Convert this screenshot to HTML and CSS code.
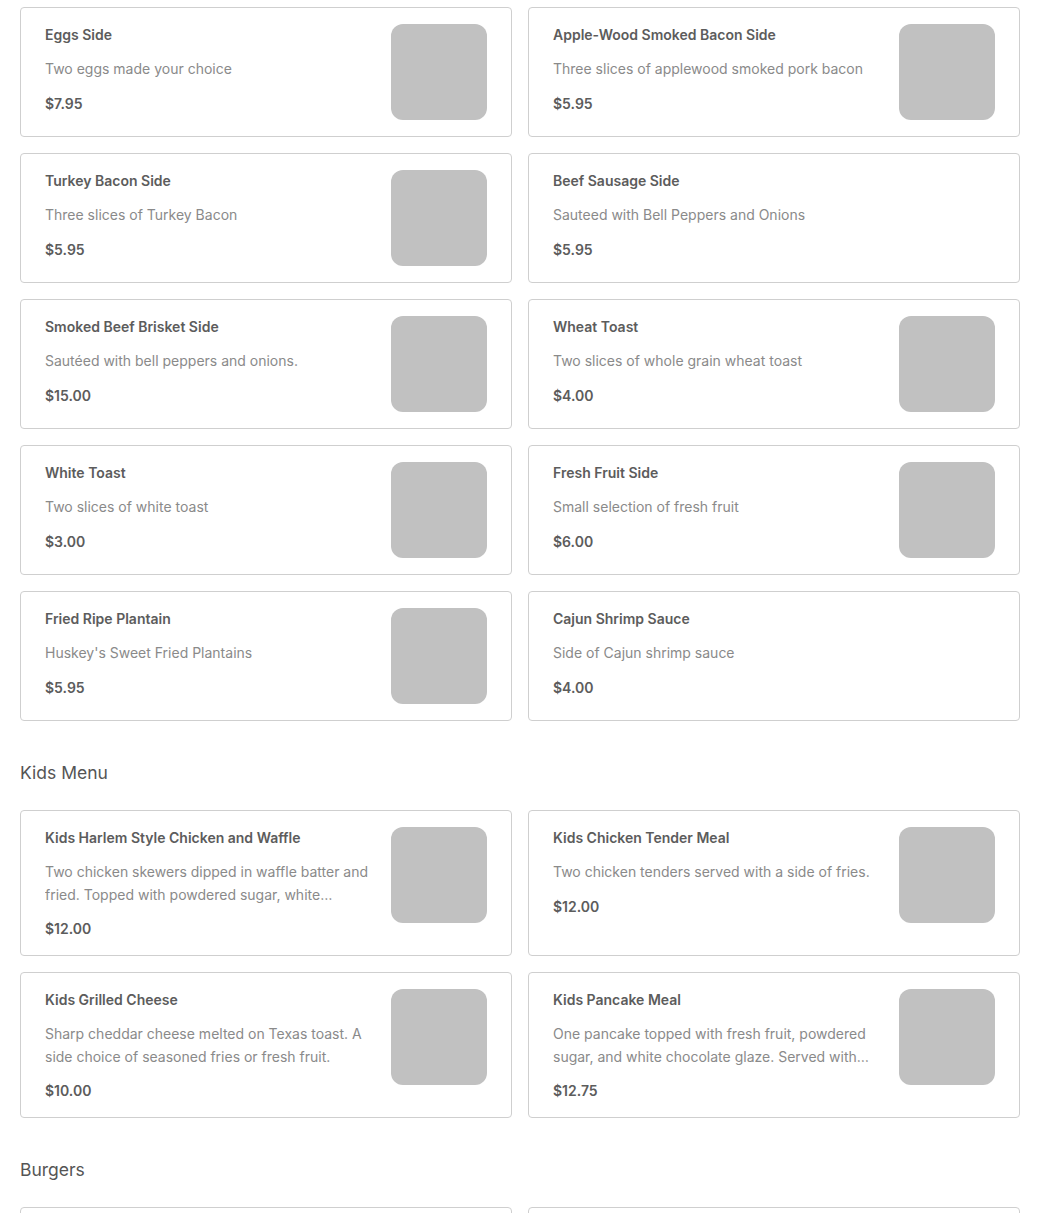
FILE: index.html
```html
<!DOCTYPE html>
<html lang="en">
<head>
<meta charset="utf-8">
<title>Menu</title>
<link rel="stylesheet" href="styles.css">
</head>
<body>
<main class="menu">
  <section class="section">
    <div class="grid">
      <article class="card">
        <div class="info"><h3 class="name">Eggs Side</h3><p class="desc">Two eggs made your choice</p><p class="price">$7.95</p></div>
        <div class="thumb"></div>
      </article>
      <article class="card">
        <div class="info"><h3 class="name">Apple-Wood Smoked Bacon Side</h3><p class="desc">Three slices of applewood smoked pork bacon</p><p class="price">$5.95</p></div>
        <div class="thumb"></div>
      </article>
      <article class="card">
        <div class="info"><h3 class="name">Turkey Bacon Side</h3><p class="desc">Three slices of Turkey Bacon</p><p class="price">$5.95</p></div>
        <div class="thumb"></div>
      </article>
      <article class="card">
        <div class="info"><h3 class="name">Beef Sausage Side</h3><p class="desc">Sauteed with Bell Peppers and Onions</p><p class="price">$5.95</p></div>
      </article>
      <article class="card">
        <div class="info"><h3 class="name">Smoked Beef Brisket Side</h3><p class="desc">Sautéed with bell peppers and onions.</p><p class="price">$15.00</p></div>
        <div class="thumb"></div>
      </article>
      <article class="card">
        <div class="info"><h3 class="name">Wheat Toast</h3><p class="desc">Two slices of whole grain wheat toast</p><p class="price">$4.00</p></div>
        <div class="thumb"></div>
      </article>
      <article class="card">
        <div class="info"><h3 class="name">White Toast</h3><p class="desc">Two slices of white toast</p><p class="price">$3.00</p></div>
        <div class="thumb"></div>
      </article>
      <article class="card">
        <div class="info"><h3 class="name">Fresh Fruit Side</h3><p class="desc">Small selection of fresh fruit</p><p class="price">$6.00</p></div>
        <div class="thumb"></div>
      </article>
      <article class="card">
        <div class="info"><h3 class="name">Fried Ripe Plantain</h3><p class="desc">Huskey's Sweet Fried Plantains</p><p class="price">$5.95</p></div>
        <div class="thumb"></div>
      </article>
      <article class="card">
        <div class="info"><h3 class="name">Cajun Shrimp Sauce</h3><p class="desc">Side of Cajun shrimp sauce</p><p class="price">$4.00</p></div>
      </article>
    </div>
  </section>

  <section class="section">
    <h2 class="section-title">Kids Menu</h2>
    <div class="grid">
      <article class="card">
        <div class="info"><h3 class="name">Kids Harlem Style Chicken and Waffle</h3><p class="desc">Two chicken skewers dipped in waffle batter and fried. Topped with powdered sugar, white chocolate glaze and strawberries.</p><p class="price">$12.00</p></div>
        <div class="thumb"></div>
      </article>
      <article class="card">
        <div class="info"><h3 class="name">Kids Chicken Tender Meal</h3><p class="desc">Two chicken tenders served with a side of fries.</p><p class="price">$12.00</p></div>
        <div class="thumb"></div>
      </article>
      <article class="card">
        <div class="info"><h3 class="name">Kids Grilled Cheese</h3><p class="desc">Sharp cheddar cheese melted on Texas toast. A side choice of seasoned fries or fresh fruit.</p><p class="price">$10.00</p></div>
        <div class="thumb"></div>
      </article>
      <article class="card">
        <div class="info"><h3 class="name">Kids Pancake Meal</h3><p class="desc">One pancake topped with fresh fruit, powdered sugar, and white chocolate glaze. Served with bacon.</p><p class="price">$12.75</p></div>
        <div class="thumb"></div>
      </article>
    </div>
  </section>

  <section class="section">
    <h2 class="section-title">Burgers</h2>
    <div class="grid">
      <article class="card card-empty"></article>
      <article class="card card-empty"></article>
    </div>
  </section>
</main>
</body>
</html>
```

FILE: styles.css
```css
* { box-sizing: border-box; }

html, body {
  margin: 0;
  padding: 0;
  background: #ffffff;
}

body {
  font-family: Inter, "Noto Sans", "Liberation Sans", sans-serif;
  font-size: 14px;
  color: #555555;
}

.menu {
  width: 1000px;
  margin: 0 20px;
  padding-top: 7px;
}

.section-title {
  margin: 40px 0 25px;
  font-size: 17.5px;
  line-height: 24px;
  font-weight: 400;
  color: #555555;
}

.grid {
  display: grid;
  grid-template-columns: 1fr 1fr;
  gap: 16px;
}

.card {
  display: flex;
  align-items: flex-start;
  gap: 20px;
  min-height: 130px;
  padding: 16px 24px;
  border: 1px solid #cfcfcf;
  border-radius: 4px;
  background: #fff;
}

.info {
  flex: 1;
  min-width: 0;
  display: flex;
  flex-direction: column;
}

.name {
  margin: 0 0 13px;
  font-size: 14px;
  line-height: 21px;
  font-weight: 600;
  color: #5c5c5c;
}

.desc {
  margin: 0 0 12px;
  font-size: 14px;
  line-height: 22.5px;
  font-weight: 400;
  color: #8a8a8a;
  display: -webkit-box;
  -webkit-line-clamp: 2;
  -webkit-box-orient: vertical;
  overflow: hidden;
}

.price {
  margin: 0;
  font-size: 14px;
  line-height: 21px;
  font-weight: 600;
  color: #5c5c5c;
}

.thumb {
  flex: 0 0 96px;
  width: 96px;
  height: 96px;
  border-radius: 12px;
  background: #c1c1c1;
}
```
